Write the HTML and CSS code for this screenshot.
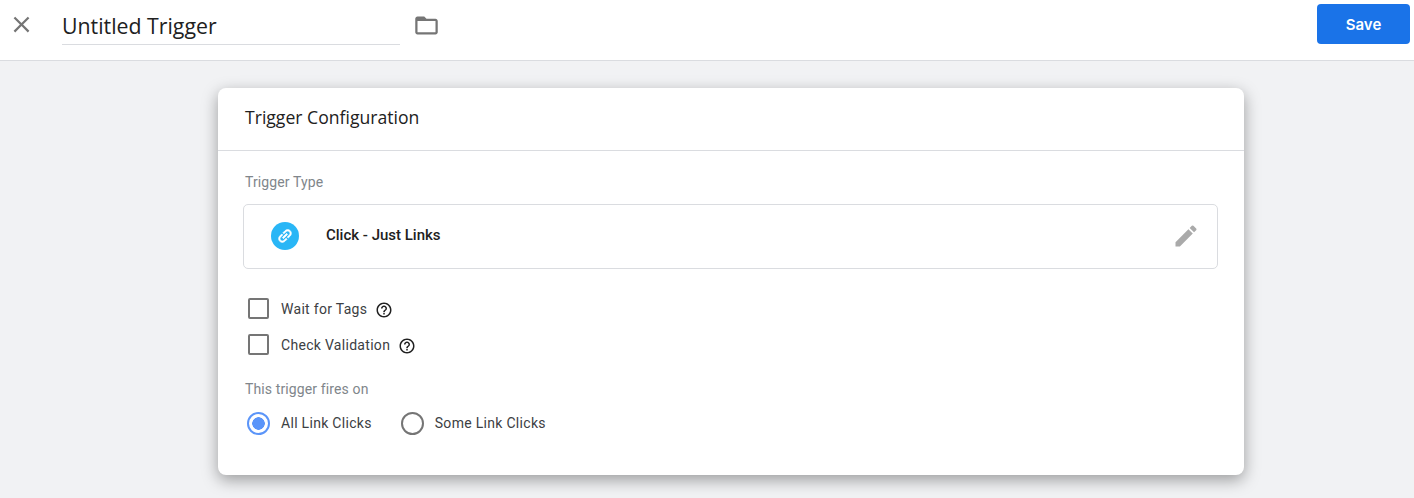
FILE: index.html
```html
<!DOCTYPE html>
<html lang="en">
<head>
    <meta charset="UTF-8">
    <title>Untitled Trigger</title>
    <link rel="stylesheet" href="styles.css">
</head>
<body>
    <header class="top-bar">
        <button class="close-btn" aria-label="Close">
            <svg width="27" height="27" viewBox="0 0 24 24"><path d="M19 6.41 17.59 5 12 10.59 6.41 5 5 6.41 10.59 12 5 17.59 6.41 19 12 13.41 17.59 19 19 17.59 13.41 12z"/></svg>
        </button>
        <div class="name-field">Untitled Trigger</div>
        <button class="folder-btn" aria-label="Choose folder">
            <svg width="27" height="27" viewBox="0 0 24 24"><path d="M20 6h-8l-2-2H4c-1.1 0-2 .9-2 2v12c0 1.1.9 2 2 2h16c1.1 0 2-.9 2-2V8c0-1.1-.9-2-2-2zm0 12H4V8h16v10z"/></svg>
        </button>
        <button class="save-btn">Save</button>
    </header>

    <main class="content">
        <section class="card">
            <div class="card-header">Trigger Configuration</div>
            <div class="card-body">
                <div class="field-label">Trigger Type</div>
                <div class="type-box">
                    <span class="type-icon">
                        <svg width="18" height="18" viewBox="0 0 24 24"><path d="M3.9 12c0-1.71 1.39-3.1 3.1-3.1h4V7H7c-2.76 0-5 2.24-5 5s2.24 5 5 5h4v-1.9H7c-1.71 0-3.1-1.39-3.1-3.1zM8 13h8v-2H8v2zm9-6h-4v1.9h4c1.71 0 3.1 1.39 3.1 3.1s-1.39 3.1-3.1 3.1h-4V17h4c2.76 0 5-2.24 5-5s-2.24-5-5-5z" transform="rotate(-45 12 12)"/></svg>
                    </span>
                    <span class="type-name">Click - Just Links</span>
                    <svg class="edit-icon" width="28" height="28" viewBox="0 0 24 24"><path d="M3 17.25V21h3.75L17.81 9.94l-3.75-3.75L3 17.25zM20.71 7.04a1 1 0 0 0 0-1.41l-2.34-2.34a1 1 0 0 0-1.41 0l-1.83 1.83 3.75 3.75 1.83-1.83z"/></svg>
                </div>

                <div class="check-row">
                    <span class="checkbox"></span>
                    <span class="option-text">Wait for Tags</span>
                    <svg class="help-icon" width="18" height="18" viewBox="0 0 24 24"><path d="M11 18h2v-2h-2v2zm1-16C6.48 2 2 6.48 2 12s4.48 10 10 10 10-4.48 10-10S17.52 2 12 2zm0 18c-4.41 0-8-3.59-8-8s3.59-8 8-8 8 3.59 8 8-3.59 8-8 8zm0-14c-2.21 0-4 1.79-4 4h2c0-1.1.9-2 2-2s2 .9 2 2c0 2-3 1.75-3 5h2c0-2.25 3-2.5 3-5 0-2.21-1.79-4-4-4z"/></svg>
                </div>
                <div class="check-row">
                    <span class="checkbox"></span>
                    <span class="option-text">Check Validation</span>
                    <svg class="help-icon" width="18" height="18" viewBox="0 0 24 24"><path d="M11 18h2v-2h-2v2zm1-16C6.48 2 2 6.48 2 12s4.48 10 10 10 10-4.48 10-10S17.52 2 12 2zm0 18c-4.41 0-8-3.59-8-8s3.59-8 8-8 8 3.59 8 8-3.59 8-8 8zm0-14c-2.21 0-4 1.79-4 4h2c0-1.1.9-2 2-2s2 .9 2 2c0 2-3 1.75-3 5h2c0-2.25 3-2.5 3-5 0-2.21-1.79-4-4-4z"/></svg>
                </div>

                <div class="field-label fires-label">This trigger fires on</div>
                <div class="radio-row">
                    <span class="radio radio-on"></span>
                    <span class="option-text">All Link Clicks</span>
                    <span class="radio radio-second"></span>
                    <span class="option-text">Some Link Clicks</span>
                </div>
            </div>
        </section>
    </main>
</body>
</html>
```

FILE: styles.css
```css
* {
    margin: 0;
    padding: 0;
    box-sizing: border-box;
}

body {
    background-color: #f1f2f4;
    font-family: Roboto, sans-serif;
    height: 498px;
    overflow: hidden;
}

button {
    background: none;
    border: none;
    font-family: inherit;
}

.top-bar {
    display: flex;
    align-items: flex-start;
    height: 61px;
    background-color: white;
    border-bottom: 1px solid #dadce0;
}

.close-btn {
    width: 27px;
    height: 27px;
    margin: 11px 0 0 8px;
}

.close-btn svg {
    fill: #757575;
}

.name-field {
    width: 338px;
    height: 32px;
    margin: 13px 0 0 27px;
    border-bottom: 1px solid #dadce0;
    font-family: "Open Sans", sans-serif;
    font-size: 21.3px;
    line-height: 26px;
    color: #212121;
}

.folder-btn {
    width: 27px;
    height: 27px;
    margin: 12px 0 0 13px;
}

.folder-btn svg {
    fill: #757575;
}

.save-btn {
    width: 93px;
    height: 40px;
    margin: 4px 4px 0 auto;
    background-color: #1a73e8;
    border-radius: 4px;
    color: white;
    font-family: Inter, sans-serif;
    font-size: 15px;
    font-weight: 600;
}

.content {
    padding: 27px 170px 0 218px;
}

.card {
    width: 1026px;
    height: 387px;
    background-color: white;
    border-radius: 8px;
    box-shadow: 0 5px 16px rgba(0, 0, 0, 0.36);
}

.card-header {
    height: 63px;
    padding: 17px 27px 0;
    border-bottom: 1px solid #dadce0;
    font-family: "Open Sans", sans-serif;
    font-size: 17.6px;
    line-height: 24px;
    color: #212121;
}

.card-body {
    padding: 22px 26px 0 25px;
}

.field-label {
    font-size: 14px;
    line-height: 18px;
    letter-spacing: 0.12px;
    color: #80868b;
    margin-left: 2px;
}

.type-box {
    display: flex;
    align-items: center;
    height: 65px;
    margin-top: 13px;
    padding: 0 17px 0 27px;
    border: 1px solid #dadce0;
    border-radius: 5px;
}

.type-icon {
    display: flex;
    align-items: center;
    justify-content: center;
    width: 28px;
    height: 28px;
    margin-top: -2px;
    border-radius: 50%;
    background-color: #29b6f6;
}

.type-icon svg {
    fill: white;
    stroke: white;
    stroke-width: 0.8;
}

.type-name {
    margin-left: 27px;
    margin-top: -3px;
    font-size: 15px;
    font-weight: 500;
    color: #212121;
}

.edit-icon {
    margin-left: auto;
    margin-top: -2px;
    fill: #aaaaaa;
}

.check-row {
    display: flex;
    align-items: center;
    height: 36px;
    margin-left: 5px;
}

.type-box + .check-row {
    margin-top: 22px;
}

.checkbox {
    width: 21px;
    height: 21px;
    margin-top: -2px;
    border: 2px solid #757575;
    border-radius: 2px;
}

.option-text {
    margin-left: 12px;
    font-size: 14px;
    letter-spacing: 0.3px;
    color: #3c4043;
}

.help-icon {
    margin-left: 8px;
    margin-top: 2px;
    fill: #212121;
}

.fires-label {
    margin-top: 17px;
}

.radio-row {
    display: flex;
    align-items: center;
    margin-top: 12px;
    margin-left: 4px;
}

.radio {
    width: 23px;
    height: 23px;
    margin-top: 2px;
    border: 2px solid #757575;
    border-radius: 50%;
}

.radio + .option-text {
    margin-left: 11px;
}

.radio-on {
    border-color: #5b95f9;
    background: radial-gradient(circle, #5b95f9 6px, transparent 6.5px);
}

.radio-second {
    margin-left: 29px;
}
```
